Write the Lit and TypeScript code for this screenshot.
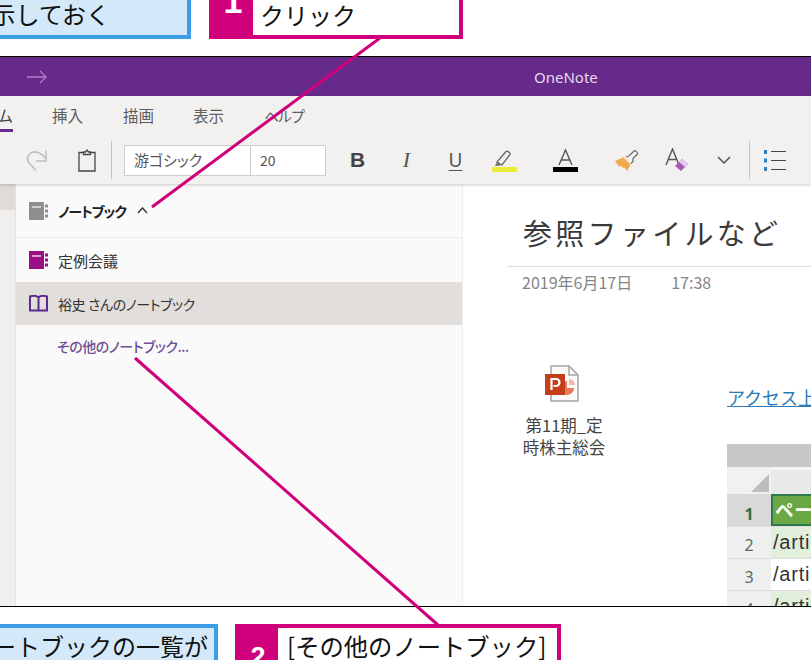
import { LitElement, html, css, svg } from "lit";
import { customElement } from "lit/decorators.js";

const notebook = (c: string) => svg`<svg width="19" height="18" viewBox="0 0 19 18"><path d="M0 0H15V18H0Z" fill="${c}"/><path d="M3 5H12" stroke="#fff" stroke-width="1.4" opacity=".85"/><path d="M16 2.5h3v3h-3zM16 7.5h3v3h-3zM16 12.5h3v3h-3z" fill="${c}"/></svg>`;

@customElement("app-root")
export class AppRoot extends LitElement {
  static styles = css`
    :host {
      display: grid;
      grid-template-rows: 56px 550px 54px;
      width: 811px;
      height: 660px;
      position: relative;
      overflow: hidden;
      background: #fff;
      font-family: "Noto Sans CJK JP", "Noto Sans", sans-serif;
      color: #111;
    }
    .top { display: flex; align-items: flex-end; padding-bottom: 17px; box-sizing: border-box; height: 56px; }
    .bottom { display: flex; align-items: flex-start; padding-top: 18px; height: 54px; box-sizing: border-box; }
    .note {
      box-sizing: border-box;
      background: #d3e9f9;
      border: 4px solid #3b9ee6;
      font-size: 24px;
      white-space: nowrap;
      display: flex;
      justify-content: flex-end;
      overflow: hidden;
      flex: none;
    }
    .note.n1 { width: 195px; height: 50px; margin-left: -4px; padding-right: 77px; align-items: flex-end; line-height: 42px; }
    .note.n2 { width: 222px; height: 50px; margin-left: -4px; padding-right: 6px; align-items: flex-start; line-height: 36px; }
    .step {
      box-sizing: border-box;
      border: 4px solid #d0007c;
      background: #fff;
      display: flex;
      flex: none;
      height: 50px;
      overflow: hidden;
      font-size: 24px;
      white-space: nowrap;
    }
    .step.s1 { width: 254px; margin-left: 18px; }
    .step.s2 { width: 326px; margin-left: 17px; }
    .num {
      flex: none;
      width: 40px;
      background: #d0007c;
      color: #fff;
      font: bold 27px "Liberation Sans", sans-serif;
      text-align: center;
    }
    .s1 .num { font-size: 34px; line-height: 26px; height: 60px; margin-top: -5px; }
    .s2 .num { padding-top: 14px; line-height: 30px; height: 60px; margin-left: -1px; margin-right: 1px; }
    .s1 .txt { padding-left: 7px; line-height: 40px; align-self: flex-end; }
    .s2 .txt { padding-left: 8px; line-height: 36px; font-size: 24.3px; }

    .win {
      border-top: 1px solid #000;
      border-bottom: 1px solid #000;
      display: flex;
      flex-direction: column;
      overflow: hidden;
      box-sizing: border-box;
      height: 551px;
    }
    .title {
      height: 39px;
      flex: none;
      background: #662a8a;
      display: flex;
      align-items: center;
      color: #e6d9ee;
      font: 15px "Noto Sans", sans-serif;
    }
    .title svg { margin-left: 27px; }
    .title span { margin-left: 487px; }
    .ribbon { flex: none; height: 88px; background: #f2f1ef; box-shadow: 0 1px 3px #0003; position: relative; z-index: 1; }
    .tabs { height: 38px; display: flex; align-items: center; font-size: 15.5px; color: #5c5c5c; font-feature-settings: "palt"; }
    .tab { position: relative; flex: none; }
    .home { width: 13px; overflow: hidden; color: #444; height: 33px; line-height: 38px; border-bottom: 3px solid #662a8a; align-self: flex-start; text-indent: -2px; }
    .t1 { margin-left: 39px; width: 71px; }
    .t2 { width: 70px; }
    .t3 { width: 71px; }
    .t4 { font-size: 14.5px; letter-spacing: -.5px; }
    .tools { height: 48px; margin-top: 2px; display: flex; align-items: center; color: #444; }
    .cell { flex: none; display: flex; justify-content: center; align-items: center; height: 40px; }
    .w74 { width: 74px; } .w26 { width: 26px; } .w11 { width: 11px; } .w12 { width: 12px; }
    .w7 { width: 7px; } .w49 { width: 49px; } .w72 { width: 72px; } .w52 { width: 52px; }
    .w48 { width: 48px; } .w46 { width: 46px; } .w2 { width: 2px; } .w14 { width: 14px; }
    .sep { flex: none; width: 1px; height: 38px; background: #c8c6c4; }
    .font-box {
      flex: none; box-sizing: border-box; background: #fff; border: 1px solid #d0cfcd;
      height: 31px; font-size: 15px; display: flex; align-items: center; padding-left: 9px; color: #555;
      font-feature-settings: "palt"; line-height: 26px;
    }
    .fname { width: 127px; }
    .fsize { width: 76px; margin-left: -1px; font-size: 14px; }
    .b { font: bold 21px "Liberation Sans", sans-serif; color: #444; }
    .i { font: italic 22px "Liberation Serif", serif; color: #555; }
    .u { font: 19px "Noto Sans", sans-serif; color: #555; text-decoration: underline; text-underline-offset: 3px; text-decoration-thickness: 1px; }

    .body { flex: 1; display: flex; min-height: 0; }
    .rail { flex: none; width: 15px; background: #f0efed; border-right: 1px solid #e4e2df; display: flex; flex-direction: column; }
    .rail i { display: block; height: 26px; background: #dedbd8; }
    .panel { flex: none; width: 446px; background: #fbfafa; border-right: 1px solid #efeeed; font-size: 15px; color: #333; font-feature-settings: "palt"; }
    .head { height: 54px; box-sizing: border-box; border-bottom: 1px solid #ecebea; display: flex; align-items: center; padding-left: 13px; gap: 10px; font-weight: 700; color: #222; font-size: 14px; letter-spacing: -1px; }
    .head svg:last-child { margin-left: 1px; }
    .row { height: 44px; display: flex; align-items: center; padding-left: 13px; gap: 10px; }
    .row.sel { background: #e1dedb; height: 43px; font-size: 14px; letter-spacing: -.4px; }
    .more { padding: 11px 0 0 41px; color: #6f4f96; font-weight: 500; font-size: 14px; letter-spacing: -.45px; }

    .content { flex: 1; min-width: 0; background: #fff; padding-left: 44px; overflow: hidden; }
    h1 { margin: 0 0 0 16px; font-size: 29px; font-weight: 400; letter-spacing: 3.3px; line-height: 44px; padding-top: 26px; color: #3a3a3a; white-space: nowrap; }
    .rule { height: 1px; background: #dedede; margin: 12px 0 0 0; }
    .meta { margin-left: 15px; height: 29px; display: flex; align-items: center; color: #858585; font-size: 16px; gap: 39px; }
    .cols { display: flex; margin-top: 69px; padding-left: 9px; }
    .att { flex: none; width: 96px; margin-right: 116px; text-align: center; font-size: 16.5px; line-height: 22px; color: #444; display: flex; flex-direction: column; align-items: center; }
    .att svg { margin-bottom: 12px; margin-left: -4px; }
    .right { flex: 1; min-width: 0; white-space: nowrap; margin-left: -1px; }
    .link { color: #2b79b7; font-size: 18px; text-decoration: underline; line-height: 28px; margin-top: 18px; }
    .sheet { margin-top: 33px; }
    .band { height: 23px; background: #c7c7c7; }
    .hdr { height: 27px; background: linear-gradient(#f4f4f4 0 3px, #e9e9e9 3px); display: flex; }
    .corner { width: 44px; flex: none; display: flex; justify-content: flex-end; align-items: flex-end; padding: 0 2px 2px 0; box-sizing: border-box; background: #f1f1f1; }
    .sr { display: flex; height: 31px; border-bottom: 1px solid #ddd; }
    .sr.first { height: 32px; }
    .rh { width: 44px; flex: none; text-align: center; color: #666; font: 16px "Noto Sans", sans-serif; line-height: 37px; background: #efefef; }
    .rh.on { background: #d9d9d9; color: #2e6f48; font-weight: 700; line-height: 40px; }
    .sc { flex: 1; font: 20px "Liberation Sans", sans-serif; line-height: 30px; padding-left: 2px; color: #333; letter-spacing: .8px; }
    .sc.g { background: #e2efda; }
    .sc.hd { background: #6aa845; color: #fff; font: 700 18.5px "Noto Sans CJK JP", sans-serif; border: 2px solid #2f7a4a; line-height: 27px; padding-left: 2px; height: 32px; box-sizing: border-box; }

    .over { position: absolute; left: 0; top: 0; pointer-events: none; z-index: 5; }
  `;

  render() {
    return html`
      <div class="top">
        <div class="note n1">示しておく</div>
        <div class="step s1"><div class="num">1</div><div class="txt">クリック</div></div>
      </div>

      <div class="win">
        <div class="title">
          <svg width="20" height="14" viewBox="0 0 20 14" fill="none" stroke="#b47ccb" stroke-width="1.3"><path d="M0 7H19M13 1l6 6-6 6"/></svg>
          <span>OneNote</span>
        </div>
        <div class="ribbon">
          <div class="tabs">
            <div class="tab home">ム</div>
            <div class="tab t1">挿入</div>
            <div class="tab t2">描画</div>
            <div class="tab t3">表示</div>
            <div class="tab t4">ヘルプ</div>
          </div>
          <div class="tools">
            <div class="cell w74">
              <svg width="22" height="23" viewBox="0 0 22 23" fill="none" stroke="#bdbdbb" stroke-width="1.5"><path d="M20 1.500v10.500h-10M20 10.500C16 3.500 8 1 4 4.500.5 8 1 12 4 15l6 6.500"/></svg>
            </div>
            <div class="cell w26">
              <svg width="18" height="23" viewBox="0 0 18 23" fill="none" stroke="#444" stroke-width="1.3"><path d="M5.500 3.500H1V22H17V3.500H12.500M5.500 5.500V3H7.500L9 1 10.500 3H12.500V5.500Z"/></svg>
            </div>
            <div class="cell w11"></div>
            <div class="sep"></div>
            <div class="cell w12"></div>
            <div class="font-box fname">游ゴシック</div>
            <div class="font-box fsize">20</div>
            <div class="cell w7"></div>
            <div class="cell w49 b">B</div>
            <div class="cell w49 i">I</div>
            <div class="cell w49 u">U</div>
            <div class="cell w49">
              <svg width="25" height="24" viewBox="0 0 25 24"><path d="M5 14 14 3.500c1-1 4.500 1 4 3L10 17Z" fill="none" stroke="#666" stroke-width="1.3"/><path d="M5 14l5 3-4 1-3 0Z" fill="#777"/><rect x="0" y="19" width="25" height="5" fill="#eaea3a"/></svg>
            </div>
            <div class="cell w72">
              <svg width="25" height="24" viewBox="0 0 25 24" fill="none" stroke="#555" stroke-width="1.4"><path d="M6 17 12.500 2 19 17M8 12H17"/><rect x="0" y="19" width="25" height="5" fill="#000" stroke="none"/></svg>
            </div>
            <div class="cell w52">
              <svg width="24" height="21" viewBox="0 0 24 21"><path d="M0 11 9 7l7 7-4 7-3-4-1.500 1.500L7 16l-3 .5Z" fill="#f0a850"/><path d="M9 7l7 7" stroke="#fbe3c2" stroke-width="2"/><path d="M11 7l3-1 5-5c1-1 4 1 3.500 3l-4.500 4.500 0 3-2 2" fill="#f4f4f2" stroke="#666" stroke-width="1.200"/></svg>
            </div>
            <div class="cell w48">
              <svg width="25" height="24" viewBox="0 0 25 24"><path d="M1 17 7.500 1 14 17M3.500 11.500H11.500" fill="none" stroke="#555" stroke-width="1.400"/><path d="M10 18l7-7 6 5-7 7Z" fill="#a855b5"/><path d="M14 14l3-3 6 5-3 3Z" fill="#e6c9ec"/></svg>
            </div>
            <div class="cell w46">
              <svg width="14" height="8" viewBox="0 0 14 8" fill="none" stroke="#555" stroke-width="1.500"><path d="M1 1l6 6 6-6"/></svg>
            </div>
            <div class="cell w2"></div>
            <div class="sep"></div>
            <div class="cell w14"></div>
            <svg width="22" height="23" viewBox="0 0 22 23"><path d="M0 1h3v4H0zM0 9.500h3v4H0zM0 18h3v4H0z" fill="#2d7fc1"/><path d="M7 2.500H22M7 11.500H22M7 20.500H22" stroke="#444" stroke-width="1.200"/></svg>
          </div>
        </div>
        <div class="body">
          <div class="rail"><i></i></div>
          <div class="panel">
            <div class="head">${notebook("#8e8e8e")}<span>ノートブック</span>
              <svg width="11" height="7" viewBox="0 0 11 7" fill="none" stroke="#333" stroke-width="1.400"><path d="M1 6l4.500-5L10 6"/></svg>
            </div>
            <div class="row">${notebook("#9c0f84")}<span>定例会議</span></div>
            <div class="row sel">
              <svg width="19" height="17" viewBox="0 0 19 17" fill="none" stroke="#5a2a90" stroke-width="2"><path d="M1 1.500C4 .5 7.500 .5 9.500 2.500 11.500 .5 15 .5 18 1.500V15.500H1ZM9.500 2.500V15.500"/></svg>
              <span>裕史 さんのノートブック</span>
            </div>
            <div class="more">その他のノートブック...</div>
          </div>
          <div class="content">
            <h1>参照ファイルなど</h1>
            <div class="rule"></div>
            <div class="meta"><span>2019年6月17日</span><span>17:38</span></div>
            <div class="cols">
              <div class="att">
                <svg width="36" height="37" viewBox="0 0 36 37"><path d="M7 1H25L34 10V36H7Z" fill="#fafafa" stroke="#a5a5a5" stroke-width="1.500"/><path d="M25 1V10H34" fill="none" stroke="#a5a5a5" stroke-width="1.500"/><path d="M23 16a7 7 0 1 0 7 7H23Z" fill="#e8795a"/><path d="M25 14a6 6 0 0 1 6 6h-6Z" fill="#f3b7a5"/><rect x="1" y="9" width="20" height="21" fill="#c43e1c"/><path d="M7.500 25V14h4.500a3.500 3.500 0 0 1 0 7H9.500" fill="none" stroke="#fff" stroke-width="2.200"/></svg>
                <div>第11期_定</div>
                <div>時株主総会</div>
              </div>
              <div class="right">
                <div class="link">アクセス上位ページ一覧</div>
                <div class="sheet">
                  <div class="band"></div>
                  <div class="hdr"><div class="corner"><svg width="18" height="18" viewBox="0 0 18 18"><path d="M18 0V18H0Z" fill="#bdbdbd"/></svg></div></div>
                  <div class="sr first"><div class="rh on">1</div><div class="sc hd">ページ</div></div>
                  <div class="sr"><div class="rh">2</div><div class="sc g">/article/</div></div>
                  <div class="sr"><div class="rh">3</div><div class="sc">/article/</div></div>
                  <div class="sr"><div class="rh">4</div><div class="sc g">/article/</div></div>
                </div>
              </div>
            </div>
          </div>
        </div>
      </div>

      <div class="bottom">
        <div class="note n2">ートブックの一覧が</div>
        <div class="step s2"><div class="num">2</div><div class="txt">[その他のノートブック]</div></div>
      </div>

      <svg class="over" width="811" height="660" viewBox="0 0 811 660" fill="none" stroke="#d0007c" stroke-width="3">
        <path d="M380 38 152 207"/>
        <path d="M135 358 438 625"/>
      </svg>
    `;
  }
}
